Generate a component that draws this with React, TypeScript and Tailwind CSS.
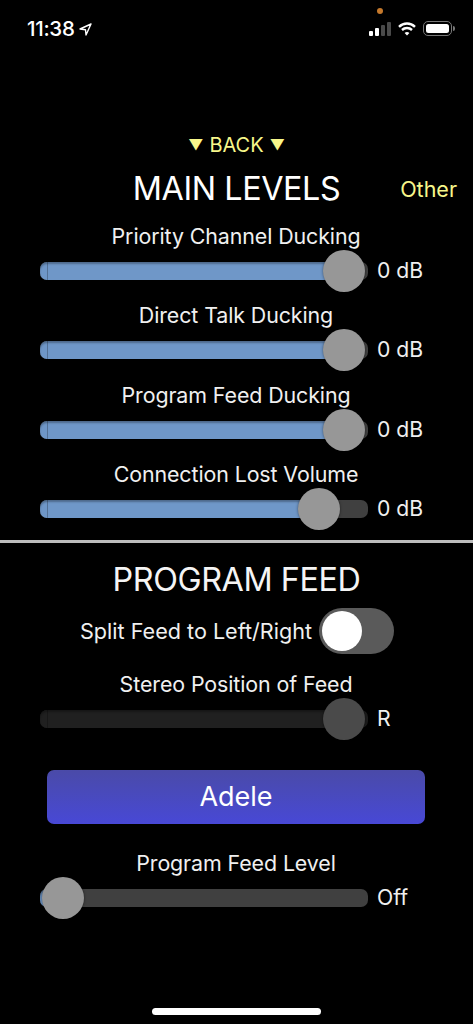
const font = { fontFamily: "Inter, Roboto, sans-serif" };

type SliderProps = {
  label: string;
  value: string;
  thumb: number;
  dim?: boolean;
  noFill?: boolean;
};

const Slider = ({ label, value, thumb, dim, noFill }: SliderProps) => {
  let fillColor = "bg-[#6f97c8]";
  if (dim) fillColor = "bg-[#202020]";
  return (
    <div className="flex flex-col">
      <div className="h-[28px] flex items-center justify-center text-[21.4px] text-[#f0f0f0] tracking-[-0.1px] pr-[1px]">{label}</div>
      <div className="h-[42px] flex items-center pl-[40px]">
        <div className={"relative w-[328px] h-[18px] rounded-[7px] " + (dim ? "bg-[#1c1c1c]" : "bg-[#404040]")}>
          <div
            className={"absolute left-0 top-0 h-full rounded-l-[7px] shadow-[inset_0_2px_2px_rgba(0,0,0,0.3)] " + fillColor}
            style={{ width: noFill ? 8 : thumb + 21 }}
          />
          <div className="absolute left-[7px] top-0 h-full w-[1px] bg-black/25" />
          <div
            className={"absolute top-[-12px] w-[42px] h-[42px] rounded-full shadow-[0_0_3px_rgba(0,0,0,0.5)] " + (dim ? "bg-[#4a4a4a]" : "bg-[#979797]")}
            style={{ left: thumb }}
          />
        </div>
        <span className="ml-[9px] text-[21.2px] text-[#f0f0f0]">{value}</span>
      </div>
    </div>
  );
};

const StatusBar = () => (
  <div className="relative h-[58px] flex items-start justify-between pt-[19px] pl-[27px] pr-[18px]">
    <div className="flex items-center gap-[4px] text-[20.5px] leading-[20px] font-medium text-white tracking-[-0.3px]">
      <span>11:38</span>
      <svg width="13" height="13" viewBox="0 0 13 13" fill="none" stroke="#fff" strokeWidth="1.4" strokeLinejoin="round">
        <path d="M12 1 L1 6 L6.5 6.7 L7 12 Z" />
      </svg>
    </div>
    <div className="absolute left-[377px] top-[8px] w-[6px] h-[6px] rounded-full bg-[#c5792c]" />
    <div className="flex items-center gap-[7px] pt-[2px]">
      <svg width="22" height="14" viewBox="0 0 22 14">
        <rect x="0" y="9" width="4" height="5" rx="1" fill="#fff" />
        <rect x="6" y="6" width="4" height="8" rx="1" fill="#fff" />
        <rect x="12" y="3" width="4" height="11" rx="1" fill="#4a4a4a" />
        <rect x="18" y="0" width="4" height="14" rx="1" fill="#4a4a4a" />
      </svg>
      <svg width="18" height="14" viewBox="0 0 18 14" fill="none" stroke="#fff" strokeWidth="2.4">
        <path d="M1 4.8 C5.5 0.4 12.5 0.4 17 4.8" />
        <path d="M4 8 C6.8 5.4 11.2 5.4 14 8" />
        <path d="M9 13.6 L6.6 11 C8 9.8 10 9.8 11.4 11 Z" fill="#fff" stroke="none" />
      </svg>
      <div className="flex items-center">
        <div className="w-[29px] h-[15px] rounded-[5px] border border-[#777] p-[2px]">
          <div className="w-full h-full rounded-[2.5px] bg-white" />
        </div>
        <div className="ml-[1px] w-[2px] h-[5px] rounded-r-full bg-[#777]" />
      </div>
    </div>
  </div>
);

export default function App() {
  return (
    <div className="w-[473px] h-[1024px] bg-black text-white overflow-hidden flex flex-col" style={font}>
      <StatusBar />

      <div className="mt-[73px] h-[28px] flex items-center justify-center text-[20px] text-[#f7f78a] gap-[6px]">
        <span className="text-[15px]">▼</span>
        <span>BACK</span>
        <span className="text-[15px]">▼</span>
      </div>

      <div className="h-[44px] mt-[6px] grid grid-cols-[1fr_auto_1fr] items-center">
        <div />
        <div className="text-[32.3px] text-white tracking-[-0.4px]">MAIN LEVELS</div>
        <div className="flex justify-end pr-[16px] text-[21.5px] text-[#f7f78a]">Other</div>
      </div>

      <div className="mt-[13px] flex flex-col gap-[9.33px]">
        <Slider label="Priority Channel Ducking" value="0 dB" thumb={283} />
        <Slider label="Direct Talk Ducking" value="0 dB" thumb={283} />
        <Slider label="Program Feed Ducking" value="0 dB" thumb={283} />
        <Slider label="Connection Lost Volume" value="0 dB" thumb={258} />
      </div>

      <div className="mt-[10px] h-[3px] bg-[#bdbdbd]" />

      <div className="mt-[15px] h-[44px] flex items-center justify-center text-[32.3px] text-[#f5f5f5] tracking-[-0.4px]">PROGRAM FEED</div>

      <div className="mt-[6px] h-[46px] flex items-center pl-[80px] gap-[7px]">
        <span className="w-[232px] whitespace-nowrap text-[21.6px] text-[#f0f0f0]">Split Feed to Left/Right</span>
        <div className="w-[75px] h-[46px] rounded-full bg-[#5a5a5a] flex items-center pl-[3px]">
          <div className="w-[40px] h-[40px] rounded-full bg-white" />
        </div>
      </div>

      <div className="mt-[16px]">
        <Slider label="Stereo Position of Feed" value="R" thumb={283} dim />
      </div>

      <div className="mt-[30px] mx-[47px] w-[378px] h-[54px] pt-[1px] rounded-[7px] bg-gradient-to-b from-[#4a4aa8] to-[#4848d6] flex items-center justify-center text-[27px] text-white">
        Adele
      </div>

      <div className="mt-[25px]">
        <Slider label="Program Feed Level" value="Off" thumb={2} noFill />
      </div>

      <div className="mt-[89px] mx-auto w-[169px] h-[7px] rounded-full bg-white" />
    </div>
  );
}
